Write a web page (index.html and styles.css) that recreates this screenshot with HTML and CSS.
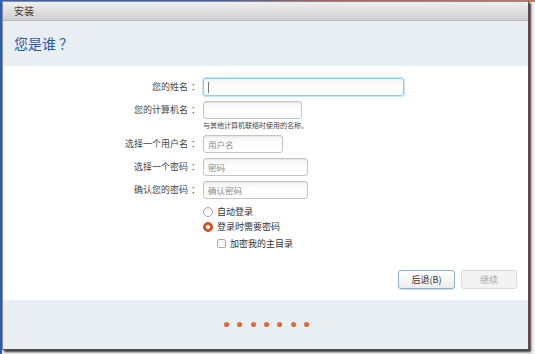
FILE: index.html
```html
<!DOCTYPE html>
<html lang="zh-CN">
<head>
<meta charset="utf-8">
<title>安装</title>
<link rel="stylesheet" href="styles.css">
</head>
<body>
<div class="window">
  <div class="titlebar">安装</div>
  <div class="header"><h1>您是谁<span class="q">？</span></h1></div>
  <div class="content">
    <div class="form">
      <label class="lbl">您的姓名<span class="p">：</span></label>
      <div class="cell"><div class="field focus w1"><span class="caret"></span></div></div>

      <label class="lbl">您的计算机名<span class="p">：</span></label>
      <div class="cell"><div class="field w2"></div><div class="hint">与其他计算机联络时使用的名称。</div></div>

      <label class="lbl">选择一个用户名<span class="p">：</span></label>
      <div class="cell"><div class="field w3"><span class="ph">用户名</span></div></div>

      <label class="lbl">选择一个密码<span class="p">：</span></label>
      <div class="cell"><div class="field w4"><span class="ph">密码</span></div></div>

      <label class="lbl">确认您的密码<span class="p">：</span></label>
      <div class="cell"><div class="field w4"><span class="ph">确认密码</span></div></div>

      <div></div>
      <div class="options">
        <div class="opt"><span class="radio"></span>自动登录</div>
        <div class="opt"><span class="radio on"></span>登录时需要密码</div>
        <div class="opt sub"><span class="check"></span>加密我的主目录</div>
      </div>
    </div>
    <div class="buttons">
      <div class="btn back">后退(B)</div>
      <div class="btn disabled">继续</div>
    </div>
  </div>
  <div class="footer">
    <span class="dot"></span><span class="dot"></span><span class="dot"></span><span class="dot"></span><span class="dot"></span><span class="dot"></span><span class="dot"></span>
  </div>
</div>
</body>
</html>
```

FILE: styles.css
```css
html, body {
  margin: 0;
  padding: 0;
}
body {
  width: 535px;
  height: 354px;
  overflow: hidden;
  background:
    linear-gradient(to right, #3563b4 0, #3d63ad 40%, #a9645e 60%, #c27b66 100%) top left / 100% 2px no-repeat,
    linear-gradient(#2c5cb4, #2c5cb4) top left / 2px 100% no-repeat,
    #f2f2f2;
  font-family: "Noto Sans CJK SC", "Noto Sans", sans-serif;
  color: #333;
}
.p {
  padding-left: 3px;
  margin-right: -3px;
}
.q {
  padding-left: 3px;
}
.window {
  margin: 1px 0 0 2px;
  width: 525px;
  height: 347px;
  border: 1px solid #8d8d8d;
  border-right-color: #6b4c55;
  border-bottom-color: #555;
  box-shadow: 2px 2px 2px rgba(20, 20, 20, 0.85);
  display: flex;
  flex-direction: column;
  background: #fff;
}
.titlebar {
  height: 18px;
  line-height: 18px;
  padding-left: 11px;
  font-size: 10px;
  color: #3a3a3a;
  background: linear-gradient(#efefef, #cfcfcf);
  border-bottom: 1px solid #b8b8b8;
  border-radius: 3px 3px 0 0;
}
.header {
  height: 45px;
  background: #e9eef2;
  display: flex;
  align-items: center;
  padding-left: 11px;
}
.header h1 {
  margin: -2px 0 0 0;
  font-size: 14px;
  font-weight: normal;
  color: #1f5e98;
  letter-spacing: 0;
}
.content {
  height: 234px;
  display: flex;
  flex-direction: column;
}
.form {
  display: grid;
  grid-template-columns: 194px auto;
  column-gap: 6px;
  row-gap: 5px;
  margin-top: 12px;
  justify-content: start;
}
.lbl {
  font-size: 9px;
  line-height: 18px;
  text-align: right;
  color: #444;
  align-self: start;
}
.cell {
  display: flex;
  flex-direction: column;
  align-items: flex-start;
}
.field {
  box-sizing: border-box;
  height: 18px;
  border: 1px solid #c4c4c4;
  border-radius: 3px;
  background: linear-gradient(#f3f3f3, #fdfdfd 40%, #fff);
  box-shadow: inset 0 1px 1px rgba(0, 0, 0, 0.06);
  display: flex;
  align-items: center;
  padding-left: 4px;
}
.field.focus {
  border-color: #86d3e6;
  box-shadow: 0 0 1px 1px rgba(134, 211, 230, 0.55);
}
.w1 { width: 201px; }
.w2 { width: 99px; }
.w3 { width: 80px; }
.w4 { width: 105px; }
.caret {
  width: 1px;
  height: 11px;
  background: #777;
}
.ph {
  font-size: 8.5px;
  color: #8a8a8a;
}
.hint {
  font-size: 7px;
  line-height: 10px;
  margin-top: 1px;
  color: #444;
}
.options {
  display: flex;
  flex-direction: column;
}
.opt {
  height: 15px;
  display: flex;
  align-items: center;
  font-size: 9px;
  color: #333;
}
.opt.sub {
  margin-top: 2px;
  padding-left: 14px;
}
.radio {
  box-sizing: border-box;
  width: 10px;
  height: 10px;
  border-radius: 50%;
  border: 1px solid #a9a9a9;
  background: linear-gradient(#f4f4f4, #fff);
  margin-right: 4px;
}
.radio.on {
  border-color: #b8461b;
  background: radial-gradient(circle, #fff 0, #fff 1.6px, #e05c2a 2.2px, #d34f20 100%);
}
.check {
  box-sizing: border-box;
  width: 9px;
  height: 9px;
  border-radius: 2px;
  border: 1px solid #a9a9a9;
  background: linear-gradient(#f2f2f2, #fff);
  margin-right: 4px;
}
.buttons {
  display: flex;
  justify-content: flex-end;
  gap: 6px;
  margin-top: 19px;
  padding-right: 11px;
}
.btn {
  box-sizing: border-box;
  height: 19px;
  width: 57px;
  border-radius: 3px;
  font-size: 9px;
  display: flex;
  align-items: center;
  justify-content: center;
}
.btn.back {
  border: 1px solid #8eb1cd;
  background: linear-gradient(#ffffff, #ececec);
  color: #333;
  box-shadow: 0 1px 0 rgba(142, 177, 205, 0.4);
}
.btn.disabled {
  width: 56px;
  border: 1px solid #d9d9d9;
  background: #f3f3f3;
  color: #a9a9a9;
}
.footer {
  flex: 1;
  background: #e9eef2;
  display: flex;
  align-items: center;
  justify-content: center;
  gap: 8.3px;
  padding-left: 2px;
}
.dot {
  width: 5px;
  height: 5px;
  border-radius: 50%;
  background: radial-gradient(circle at 40% 40%, #ef7440, #d24e1c);
}
```
